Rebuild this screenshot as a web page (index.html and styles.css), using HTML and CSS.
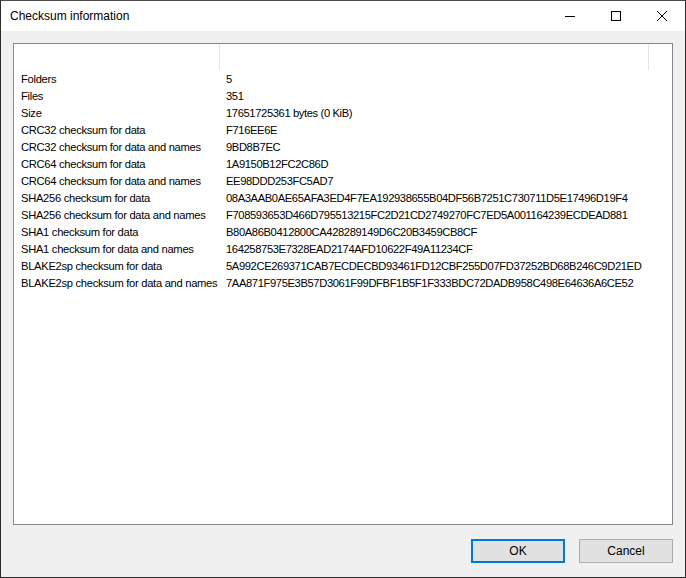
FILE: index.html
```html
<!DOCTYPE html>
<html lang="en">
<head>
    <meta charset="UTF-8">
    <title>Checksum information</title>
    <link rel="stylesheet" href="styles.css">
</head>
<body>
    <div class="window">
        <div class="titlebar">
            <span class="title">Checksum information</span>
            <div class="controls">
                <span class="ctl">
                    <svg width="10" height="10" viewBox="0 0 10 10"><path d="M0 5.5H10" stroke="#000" stroke-width="1"/></svg>
                </span>
                <span class="ctl">
                    <svg width="10" height="10" viewBox="0 0 10 10"><rect x="0.5" y="0.5" width="9" height="9" fill="none" stroke="#000" stroke-width="1"/></svg>
                </span>
                <span class="ctl">
                    <svg width="10" height="10" viewBox="0 0 10 10"><path d="M0 0L10 10M10 0L0 10" stroke="#000" stroke-width="1"/></svg>
                </span>
            </div>
        </div>

        <div class="content">
            <div class="listbox">
                <div class="header">
                    <div class="hcol name"></div>
                    <div class="hcol value"></div>
                </div>
                <table class="rows">
                    <tr><td>Folders</td><td>5</td></tr>
                    <tr><td>Files</td><td>351</td></tr>
                    <tr><td>Size</td><td>17651725361 bytes (0 KiB)</td></tr>
                    <tr><td>CRC32 checksum for data</td><td>F716EE6E</td></tr>
                    <tr><td>CRC32 checksum for data and names</td><td>9BD8B7EC</td></tr>
                    <tr><td>CRC64 checksum for data</td><td>1A9150B12FC2C86D</td></tr>
                    <tr><td>CRC64 checksum for data and names</td><td>EE98DDD253FC5AD7</td></tr>
                    <tr><td>SHA256 checksum for data</td><td>08A3AAB0AE65AFA3ED4F7EA192938655B04DF56B7251C730711D5E17496D19F4</td></tr>
                    <tr><td>SHA256 checksum for data and names</td><td>F708593653D466D795513215FC2D21CD2749270FC7ED5A001164239ECDEAD881</td></tr>
                    <tr><td>SHA1 checksum for data</td><td>B80A86B0412800CA428289149D6C20B3459CB8CF</td></tr>
                    <tr><td>SHA1 checksum for data and names</td><td>164258753E7328EAD2174AFD10622F49A11234CF</td></tr>
                    <tr><td>BLAKE2sp checksum for data</td><td>5A992CE269371CAB7ECDECBD93461FD12CBF255D07FD37252BD68B246C9D21ED</td></tr>
                    <tr><td>BLAKE2sp checksum for data and names</td><td>7AA871F975E3B57D3061F99DFBF1B5F1F333BDC72DADB958C498E64636A6CE52</td></tr>
                </table>
            </div>

            <div class="buttons">
                <button class="btn default">OK</button>
                <button class="btn">Cancel</button>
            </div>
        </div>
    </div>
</body>
</html>
```

FILE: styles.css
```css
body {
    margin: 0;
    padding: 0;
    font-family: 'Liberation Sans', Arial, sans-serif;
    font-size: 12px;
    color: #000;
}

.window {
    width: 686px;
    height: 578px;
    box-sizing: border-box;
    border: 1px solid #2b2b2b;
    border-top-color: #4a4a4a;
    background: #f0f0f0;
    display: flex;
    flex-direction: column;
}

.titlebar {
    height: 30px;
    background: #fff;
    display: flex;
    align-items: center;
    justify-content: space-between;
}

.title {
    padding-left: 9px;
    padding-bottom: 1px;
}

.controls {
    display: flex;
    height: 100%;
}

.ctl {
    width: 46px;
    display: flex;
    align-items: center;
    justify-content: center;
}

.ctl svg {
    display: block;
}

.content {
    flex: 1;
    display: flex;
    flex-direction: column;
    padding: 12px 12px 0 12px;
}

.listbox {
    height: 482px;
    box-sizing: border-box;
    border: 1px solid #828790;
    background: #fff;
    overflow: hidden;
}

.header {
    height: 26px;
    display: flex;
}

.hcol {
    height: 100%;
    box-sizing: border-box;
    border-right: 1px solid #e5e5e5;
}

.hcol.name {
    width: 206px;
}

.hcol.value {
    width: 429px;
}

.rows {
    border-collapse: collapse;
    table-layout: fixed;
    width: 100%;
    margin-top: 1px;
}

.rows td {
    padding: 0 0 0 7px;
    height: 17px;
    line-height: 17px;
    white-space: nowrap;
    font-size: 11.2px;
    letter-spacing: -0.38px;
}

.rows td:first-child {
    width: 205px;
    box-sizing: border-box;
    letter-spacing: -0.3px;
}

.buttons {
    display: flex;
    justify-content: flex-end;
    gap: 14px;
    margin: 14px 0;
}

.btn {
    width: 94px;
    height: 24px;
    box-sizing: border-box;
    border: 1px solid #adadad;
    background: #e1e1e1;
    font-family: 'Liberation Sans', Arial, sans-serif;
    font-size: 12px;
    color: #000;
    padding: 0;
}

.btn.default {
    border: 2px solid #0078d7;
}
```
